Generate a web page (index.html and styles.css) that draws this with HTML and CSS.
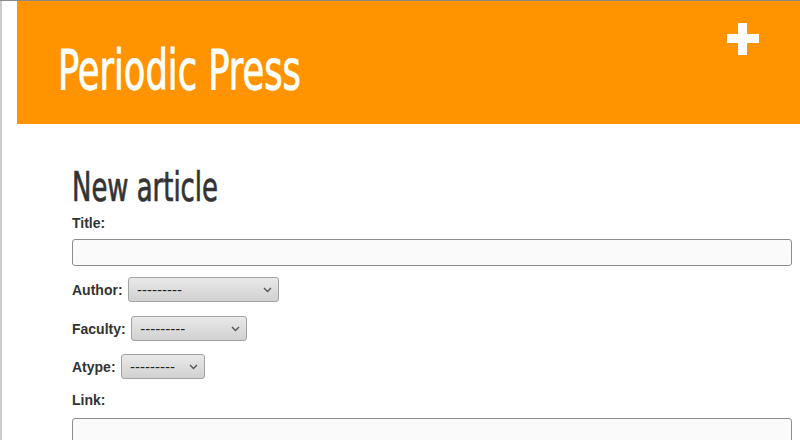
FILE: index.html
```
<!DOCTYPE html>
<html lang="en">
<head>
<meta charset="utf-8">
<title>Periodic Press - New article</title>
<link rel="stylesheet" href="styles.css">
</head>
<body>
<div class="frame">
  <header class="masthead">
    <a class="brand" href="#"><span class="brand-text">Periodic Press</span></a>
    <a class="add" href="#" aria-label="New article">
      <svg width="32" height="32" viewBox="0 0 32 32"><path d="M11 0h9v11h12v9H20v12h-9V20H0v-9h11z" fill="#fff"/></svg>
    </a>
  </header>
  <main class="content">
    <h1 class="page-title"><span class="page-title-text">New article</span></h1>
    <form class="form">
      <div class="field stacked field-title">
        <label for="id_title">Title:</label>
        <input class="text" id="id_title" type="text">
      </div>
      <div class="field inline field-author">
        <label for="id_author">Author:</label>
        <span class="select-wrap w-author">
          <select id="id_author"><option>---------</option></select>
          <svg class="chev" width="9" height="6" viewBox="0 0 9 6"><path d="M1 1l3.5 3.5L8 1" fill="none" stroke="#555" stroke-width="1.4"/></svg>
        </span>
      </div>
      <div class="field inline field-faculty">
        <label for="id_faculty">Faculty:</label>
        <span class="select-wrap w-faculty">
          <select id="id_faculty"><option>---------</option></select>
          <svg class="chev" width="9" height="6" viewBox="0 0 9 6"><path d="M1 1l3.5 3.5L8 1" fill="none" stroke="#555" stroke-width="1.4"/></svg>
        </span>
      </div>
      <div class="field inline field-atype">
        <label for="id_atype">Atype:</label>
        <span class="select-wrap w-atype">
          <select id="id_atype"><option>---------</option></select>
          <svg class="chev" width="9" height="6" viewBox="0 0 9 6"><path d="M1 1l3.5 3.5L8 1" fill="none" stroke="#555" stroke-width="1.4"/></svg>
        </span>
      </div>
      <div class="field stacked field-link">
        <label for="id_link">Link:</label>
        <input class="text" id="id_link" type="text">
      </div>
    </form>
  </main>
</div>
</body>
</html>
```
FILE: styles.css
```
html, body {
  margin: 0;
  padding: 0;
}
body {
  border-top: 1px solid #8a8a8a;
  background: #fff;
  font-family: "Liberation Sans", Arial, sans-serif;
  color: #333;
  overflow: hidden;
}
.frame {
  border-left: 2px solid #cccccc;
  padding-left: 15px;
  min-height: calc(100vh - 1px);
  box-sizing: border-box;
}
.masthead {
  background: #ff9400;
  height: 123px;
  display: flex;
  justify-content: space-between;
  align-items: flex-start;
  padding: 0 41px;
}
.brand {
  margin-top: 41px;
  color: #fff;
  text-decoration: none;
  font-family: "DejaVu Sans Condensed", "DejaVu Sans", sans-serif;
  font-size: 56px;
  line-height: 56px;
  white-space: nowrap;
  -webkit-text-stroke: 0.9px #fff;
}
.brand-text {
  display: inline-block;
  transform: scaleX(0.70);
  transform-origin: left center;
}
.add {
  margin-top: 22px;
  display: block;
  width: 32px;
  height: 32px;
}
.add svg {
  display: block;
}
.content {
  padding: 43px 8px 0 55px;
}
.page-title {
  margin: 0;
  font-family: "DejaVu Sans Condensed", "DejaVu Sans", sans-serif;
  font-weight: normal;
  font-size: 40px;
  line-height: 40px;
  color: #333;
  white-space: nowrap;
  -webkit-text-stroke: 0.7px #333;
}
.page-title-text {
  display: inline-block;
  transform: scaleX(0.72);
  transform-origin: left center;
}
.form {
  display: flex;
  flex-direction: column;
}
.field label {
  font-weight: bold;
  font-size: 14px;
  line-height: 16px;
  color: #333;
}
.stacked {
  display: flex;
  flex-direction: column;
}
.stacked .text {
  margin-top: 8px;
}
.field-title { margin-top: 8px; }
.field-author { margin-top: 11px; }
.field-faculty { margin-top: 14px; }
.field-atype { margin-top: 13px; }
.field-link { margin-top: 13px; }
.field-link .text { margin-top: 10px; }
.text {
  box-sizing: border-box;
  width: 100%;
  height: 27px;
  border: 1px solid #8c8c8c;
  border-radius: 3px;
  background: #fafafa;
  padding: 2px 6px;
  font: 14px "Liberation Sans", Arial, sans-serif;
}
.inline {
  display: flex;
  align-items: center;
  gap: 5.5px;
}
.select-wrap {
  position: relative;
  display: inline-flex;
  height: 25px;
}
.select-wrap select {
  -webkit-appearance: none;
  appearance: none;
  box-sizing: border-box;
  width: 100%;
  height: 25px;
  margin: 0;
  border: 1px solid #a3a3a3;
  border-radius: 3px;
  background: linear-gradient(#e9e9e9, #d1d1d1);
  padding: 0 8px;
  font: 15px "Liberation Sans", Arial, sans-serif;
  color: #222;
}
.chev {
  position: absolute;
  right: 7px;
  top: 10px;
  pointer-events: none;
}
.w-author { width: 151px; }
.w-faculty { width: 116px; }
.w-atype { width: 84px; }
```
